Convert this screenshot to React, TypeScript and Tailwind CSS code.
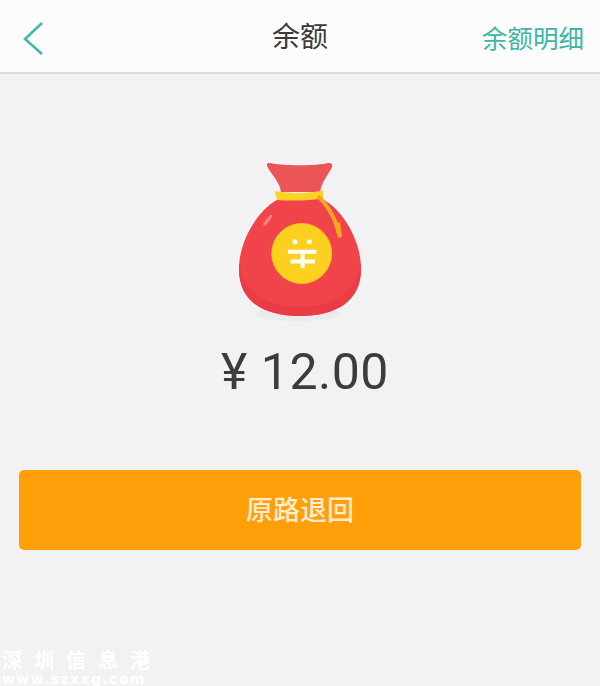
function MoneyBag() {
    return (
        <svg width="130" height="164" viewBox="235 160 130 164" fill="none">
            {/* shadow */}
            <ellipse cx="298" cy="314" rx="42" ry="7" fill="#ebebed" />
            {/* neck */}
            <path d="M270 163 C282 166 318 166 328 163 C331 162.500 333 164 332 167 C329 174 322 181 320 192 L281 192 C279 181 272 175 268 168 C266 164 267 162.500 270 163 Z" fill="#ec5557" />
            {/* body */}
            <path d="M281 198 L320 198 C340 206 361 238 361 269 C361 302 335 316 300 316 C264 316 239 302 239 269 C239 238 261 206 281 198 Z" fill="#f0434a" />
            <path d="M239 269 C239 302 264 316 300 316 C335 316 361 302 361 269 C361 267 361 265 360.500 263 C358 292 333 307 300 307 C267 307 242 292 239.500 263 C239 265 239 267 239 269 Z" fill="#e93c45" />
            {/* highlight */}
            <path d="M264 222 C268 217 271 214 272 215 C273 217 268 223 265 226 C263 226 263 224 264 222 Z" fill="#f77f80" />
            {/* string */}
            <path d="M275 191 C290 194 310 194 323 190 L323 198 C310 201 290 201 277 200 Z" fill="#fcd320" />
            <path d="M319 197 C327 205 333 215 337 226" stroke="#f6a623" strokeWidth="4" strokeLinecap="round" />
            <path d="M334 224 L340 222 L342 237 L338 238 Z" fill="#f6a623" />
            {/* coin */}
            <circle cx="301.700" cy="253.500" r="30" fill="#fbd01f" stroke="#f7bd2a" strokeWidth="1" />
            <circle cx="295" cy="241.700" r="2.500" fill="#fff" />
            <circle cx="309.300" cy="241.700" r="2.500" fill="#fff" />
            <path d="M288 251.700 H316.500 M290.500 261.500 H315 M302.700 251.700 V268" stroke="#fff" strokeWidth="4" />
        </svg>
    )
}

export default function App() {
    return (
        <div className="relative w-[600px] h-[686px] overflow-hidden bg-[#f2f2f4] font-['Roboto','Noto_Sans_CJK_SC',sans-serif]">
            {/* Header */}
            <header className="h-[74px] bg-[#fcfcfc] border-b-2 border-[#dcdcdc] flex items-center justify-between pl-[22px] pr-[16px]">
                <svg width="22" height="34" viewBox="0 0 22 34" fill="none" className="mt-[3px]">
                    <path d="M20 2 L3 18 L20 33" stroke="#3fb8a8" strokeWidth="2.500" />
                </svg>
                <h1 className="absolute left-0 right-0 top-[18px] text-center text-[28px] leading-[40px] text-[#3a3a3a]">余额</h1>
                <a href="#" className="text-[25.500px] leading-[36px] text-[#3fb5a5] mt-[5px]">余额明细</a>
            </header>

            {/* Balance */}
            <main className="flex flex-col items-center">
                <div className="mt-[86px]">
                    <MoneyBag />
                </div>
                <p className="mt-[18px] ml-[10px] text-[50px] leading-[60px] text-[#3c3c3e] tracking-[0.5px]">¥ 12.00</p>
                <div className="w-full px-[19px] mt-[68px]">
                    <button type="button" className="w-full h-[80px] rounded-[5px] bg-[#ff9f0a] text-[#fdeccb] text-[27px] font-medium pt-[2px]">
                        原路退回
                    </button>
                </div>
            </main>

            {/* Watermark */}
            <div className="absolute left-[2px] top-[650px] w-[148px] text-white font-bold">
                <div className="flex justify-between text-[20px] leading-[22px]"><span>深</span><span>圳</span><span>信</span><span>息</span><span>港</span></div>
                <div className="text-[14px] leading-[14px] tracking-[1.400px] font-['DejaVu_Sans',sans-serif]">www.szxxg.com</div>
            </div>
        </div>
    )
}
